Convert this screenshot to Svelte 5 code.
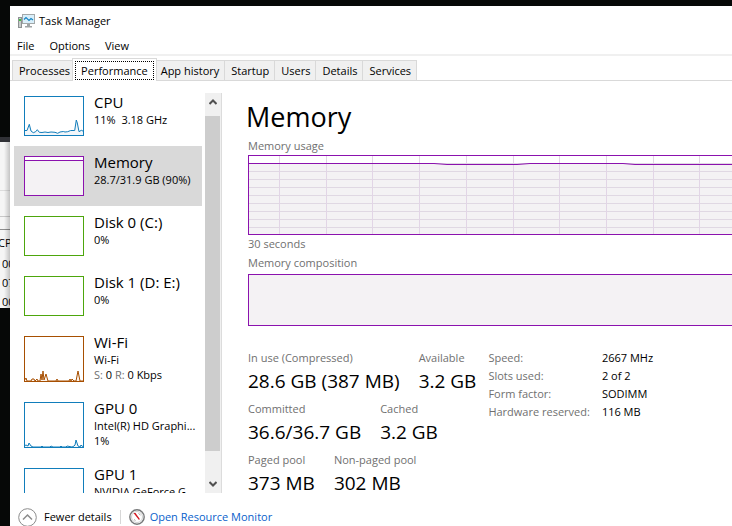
<script>
  const menus = ['File', 'Options', 'View'];
  const tabs = ['Processes', 'Performance', 'App history', 'Startup', 'Users', 'Details', 'Services'];
  let activeTab = $state('Performance');
  let selected = $state('Memory');

  const devices = [
    {
      name: 'CPU', color: '#117dbb', fill: '#f1f6fa', height: 40, lines: ['11%\u00a0 3.18 GHz'],
      points: '0,34.5 3,34.5 5.3,28.3 7,35 9.3,36.7 11.7,35.7 13.3,33.700 15.3,36.3 18,36.5 21,36 24,36.5 27,36 31,36.3 33.7,37.3 36,36 39.3,35.5 41,36 43.7,35.7 46.7,34.5 50.7,34.5 52.3,24 53.3,27 55,35.7 57.3,34.3 60,35.5'
    },
    { name: 'Memory', color: '#8b12ae', fill: '#f4f2f4', height: 40, lines: ['28.7/31.9 GB (90%)'], points: '0,4.5 60,4.5' },
    { name: 'Disk 0 (C:)', color: '#4da60c', fill: '#eff7e9', height: 40, lines: ['0%'], points: '' },
    { name: 'Disk 1 (D: E:)', color: '#4da60c', fill: '#eff7e9', height: 40, lines: ['0%'], points: '' },
    {
      name: 'Wi-Fi', color: '#a74f01', fill: '#fcf3eb', height: 46, lines: ['Wi-Fi'], send: '0', receive: '0 Kbps',
      points: '0,45 2,42 3,45 7,45 8,43 10,43 11,45 13,43 14,45 16,45 17,38 18,44 19,35 20,44 21,41 22,38 24,45 32,45 33,43 34,45 45,45 46,43 47,45 48,43 50,45 52,45 54,35 56,45 60,45'
    },
    {
      name: 'GPU 0', color: '#117dbb', fill: '#f1f6fa', height: 46, lines: ['Intel(R) HD Graphi...', '1%'],
      points: '0,44 2,43 4,44 5,41 7,44 9,45 17,45 18,44 19,45 26,45 27,44 29,45 36,45 37,44 38,45 42,45 43,44 48,45 50,44 51,43 52,38 54,44 56,45 57,43 58,44 60,45'
    },
    { name: 'GPU 1', color: '#117dbb', fill: '#f1f6fa', height: 46, lines: ['NVIDIA GeForce G...'], points: '' }
  ];

  const gridX = [30, 77, 123, 170, 217, 264, 310, 357, 404, 450, 497, 544, 590, 637, 684, 730, 777, 824, 870, 917];
  const gridY = [7, 15, 23, 31, 39, 47, 55, 63, 71];

  const stats = [
    [['In use (Compressed)', '28.6 GB (387 MB)'], ['Available', '3.2 GB']],
    [['Committed', '36.6/36.7 GB'], ['Cached', '3.2 GB']],
    [['Paged pool', '373 MB'], ['Non-paged pool', '302 MB']]
  ];
  const hardware = [
    ['Speed:', '2667 MHz'],
    ['Slots used:', '2 of 2'],
    ['Form factor:', 'SODIMM'],
    ['Hardware reserved:', '116 MB']
  ];
</script>

<div class="desktop">
  <div class="behind" aria-hidden="true">
    <div class="row head">CPU</div>
    <div class="row">00</div>
    <div class="row">07</div>
    <div class="row">00</div>
  </div>

  <div class="window">
    <header class="title">
      <svg width="17" height="16" viewBox="0 0 17 16">
        <rect x="0.5" y="4.5" width="3" height="10" fill="#c9cccc" stroke="#8d9293" />
        <rect x="1" y="6" width="2" height="2" fill="#3fc23f" />
        <rect x="4.500" y="1.500" width="12" height="9" fill="#d9effa" stroke="#a3a8a9" />
        <path d="M6 6.500 8 4.500 11 7.500 13 5.500 15 7" fill="none" stroke="#1685c4" stroke-width="1.2" />
        <path d="M9 11h3v2h2v1.500H7v-1.500h2z" fill="#9fa4a5" />
      </svg>
      <span>Task Manager</span>
    </header>

    <nav class="menu">
      {#each menus as m}<button>{m}</button>{/each}
    </nav>

    <div class="tabs" role="tablist">
      {#each tabs as t}
        <button role="tab" aria-selected={activeTab === t} class:active={activeTab === t} onclick={() => (activeTab = t)}>
          <span>{t}</span>
        </button>
      {/each}
    </div>

    <div class="body">
      <aside>
        <div class="list">
          {#each devices as d}
            <button class="device" class:selected={selected === d.name} onclick={() => (selected = d.name)}>
              <svg class="thumb" width="60" height={d.height}>
                <rect width="60" height={d.height} fill="#fff" />
                {#if d.points}
                  <polygon points={`0,${d.height} ${d.points} 60,${d.height}`} fill={d.fill} />
                  <polyline points={d.points} fill="none" stroke={d.color} />
                {/if}
                <rect x="0.5" y="0.5" width="59" height={d.height - 1} fill="none" stroke={d.color} />
              </svg>
              <span class="info">
                <span class="name">{d.name}</span>
                {#each d.lines as l}<span class="line">{l}</span>{/each}
                {#if d.send}
                  <span class="line"><i>S:</i> {d.send} <i>R:</i> {d.receive}</span>
                {/if}
              </span>
            </button>
          {/each}
        </div>
        <div class="scroll">
          <button aria-label="Scroll up">
            <svg width="8" height="6"><path d="M0.500 5 4 1.500 7.500 5" fill="none" stroke="#505050" stroke-width="2" /></svg>
          </button>
          <div class="track"><div class="grip"></div></div>
          <button aria-label="Scroll down">
            <svg width="8" height="6"><path d="M0.500 1 4 4.500 7.500 1" fill="none" stroke="#505050" stroke-width="2" /></svg>
          </button>
        </div>
      </aside>

      <main>
        <h1>Memory</h1>
        <section>
          <p class="label">Memory usage</p>
          <svg class="usage" width="100%" height="78">
            <path d="M0 7.500H185L190 8.500H265L281 7.500H374L385 8.500H2000V78H0z" fill="#f4f2f4" />
            {#each gridY as y}<rect x="0" {y} width="100%" height="1" fill="#e0d8e3" />{/each}
            {#each gridX as x}<rect {x} y="0" width="1" height="78" fill="#e2d5e6" />{/each}
            <path d="M0 7.500H185L198 8.500H268L281 7.500H374L386 8.500H2000" fill="none" stroke="#8b12ae" />
          </svg>
          <p class="label axis">30 seconds</p>
          <p class="label">Memory composition</p>
          <div class="composition"></div>

          <div class="details">
            <div class="stats">
              {#each stats as row}
                <dl>
                  {#each row as [label, value]}
                    <div><dt>{label}</dt><dd>{value}</dd></div>
                  {/each}
                </dl>
              {/each}
            </div>
            <table>
              <tbody>
                {#each hardware as [label, value]}
                  <tr><th scope="row">{label}</th><td>{value}</td></tr>
                {/each}
              </tbody>
            </table>
          </div>
        </section>
      </main>
    </div>

    <footer>
      <button class="fewer">
        <svg width="20" height="18" viewBox="0 0 20 18">
          <circle cx="9.500" cy="9.500" r="8.800" fill="#fff" stroke="#8c8c8c" />
          <path d="M5 11.500 9.500 7 14 11.500" fill="none" stroke="#8c8c8c" stroke-width="1.500" />
        </svg>
        <span>Fewer details</span>
      </button>
      <a href="#resource-monitor">
        <svg width="16" height="16" viewBox="0 0 16 16">
          <circle cx="8" cy="8" r="7.200" fill="#fff" stroke="#77797a" stroke-width="1.400" />
          <circle cx="8" cy="8" r="5.500" fill="#fff" stroke="#cfd1d1" />
          <path d="M4.500 4 6.500 4 10.800 10 10 11z" fill="#d3131c" />
          <path d="M9.500 4.500 11.500 6M5 10.500 6.500 11.500" stroke="#a5a7a8" />
        </svg>
        <span>Open Resource Monitor</span>
      </a>
    </footer>
  </div>
</div>

<style>
  :global(body) { margin: 0; background: #060807; }
  .desktop {
    position: relative;
    box-sizing: border-box;
    height: 100vh;
    padding: 6px 0 0 10px;
    overflow: hidden;
    background: #060807;
    color: #000;
    font: 11px/16px "Open Sans", "Noto Sans", sans-serif;
  }
  button { margin: 0; padding: 0; border: 0; background: none; color: inherit; font: inherit; text-align: left; }
  svg { display: block; flex: none; }
  h1, p, dl, dd { margin: 0; }

  .behind {
    position: absolute;
    top: 137px;
    left: 0;
    width: 10px;
    height: 166px;
    border-top: 5px solid #303136;
    overflow: hidden;
    background:
      linear-gradient(90deg, transparent 40%, #0003),
      linear-gradient(#dcdcdc, #dcdcdc) 0 48px / 100% 1px no-repeat,
      linear-gradient(#c8c8c8, #c8c8c8) 0 74px / 100% 1px no-repeat,
      linear-gradient(#8e8e8e, #8e8e8e) 0 87px / 100% 1px no-repeat,
      #f5f5f5;
  }
  .row { padding-left: 2px; line-height: 19px; }
  .head { margin-left: -4px; padding-top: 89px; line-height: 23px; }

  .window { display: flex; flex-direction: column; height: 100%; background: #fff; }
  .title { display: flex; align-items: center; gap: 4px; height: 30px; padding-left: 8px; }
  .menu { display: flex; gap: 15px; height: 18px; padding-left: 7px; border-bottom: 2px solid #f0f0f0; }
  .menu button { line-height: 20px; }

  .tabs { display: flex; align-items: flex-end; height: 24px; padding-left: 2px; border-bottom: 1px solid #d9d9d9; }
  .tabs button {
    box-sizing: border-box;
    height: 20px;
    padding: 0 5px 0 6px;
    border: solid #d9d9d9;
    border-width: 1px 0 0 1px;
    background: #f0f0f0;
  }
  .tabs button:last-child { border-right-width: 1px; }
  .tabs button span { display: block; line-height: 20px; }
  .tabs button.active {
    position: relative;
    height: 23px;
    margin: 0 -3px -1px;
    padding: 2px;
    border-right-width: 1px;
    background: #fff;
  }
  .tabs .active span { padding: 0 5px; border: 1px dotted #000; line-height: 17px; }

  .body { display: flex; flex: 1; min-height: 0; overflow: hidden; }
  aside { display: flex; gap: 3px; padding-left: 4px; }
  .list { width: 188px; padding-top: 5px; overflow: hidden; }
  .device { display: flex; gap: 10px; width: 100%; padding: 0 0 10px 10px; }
  .device.selected { background: #d9d9d9; }
  .thumb { margin-top: 10px; }
  .info { flex: 1; min-width: 0; padding-top: 6px; }
  .name { display: block; font-size: 15px; line-height: 20px; }
  .line { display: block; line-height: 15px; white-space: nowrap; }
  .line i { color: #707070; font-style: normal; }

  .scroll { display: flex; flex-direction: column; width: 16px; margin-top: 12px; border-right: 1px solid #dcdcdc; background: #f0f0f0; }
  .scroll button { display: grid; place-items: center; height: 18px; }
  .track { flex: 1; padding: 5px 1px 24px 0; }
  .grip { height: 100%; background: #cdcdcd; }

  main { flex: 1; min-width: 0; padding: 16px 0 0 24px; }
  section { padding-left: 2px; }
  h1 { font-size: 27px; font-weight: 400; line-height: 40px; }
  .label { color: #707070; line-height: 18px; }
  .axis { padding-bottom: 2px; line-height: 17px; }
  .usage { box-sizing: content-box; border: solid #8b12ae; border-width: 1px 0 1px 1px; }
  .composition { height: 50px; margin-top: 2px; border: solid #8b12ae; border-width: 1px 0 1px 1px; background: #f4f2f4; }

  .details { display: flex; align-items: flex-start; gap: 12px; padding-top: 23px; }
  dl { display: flex; gap: 19px; height: 51px; }
  dt, th { color: #707070; }
  dt { line-height: 18px; }
  dd { font-size: 19px; line-height: 28px; white-space: nowrap; }
  table { border-spacing: 0; }
  th, td { padding: 0; font-weight: 400; line-height: 18px; text-align: left; white-space: nowrap; }
  th { padding-right: 12px; }

  footer { display: flex; align-items: center; height: 18px; padding: 15px 0 0 8px; }
  .fewer { display: flex; align-items: center; gap: 6px; height: 14px; padding-right: 8px; border-right: 1px solid #d7d7d7; }
  footer a { display: flex; align-items: center; gap: 5px; padding-left: 8px; color: #0a5fcb; text-decoration: none; }
</style>
